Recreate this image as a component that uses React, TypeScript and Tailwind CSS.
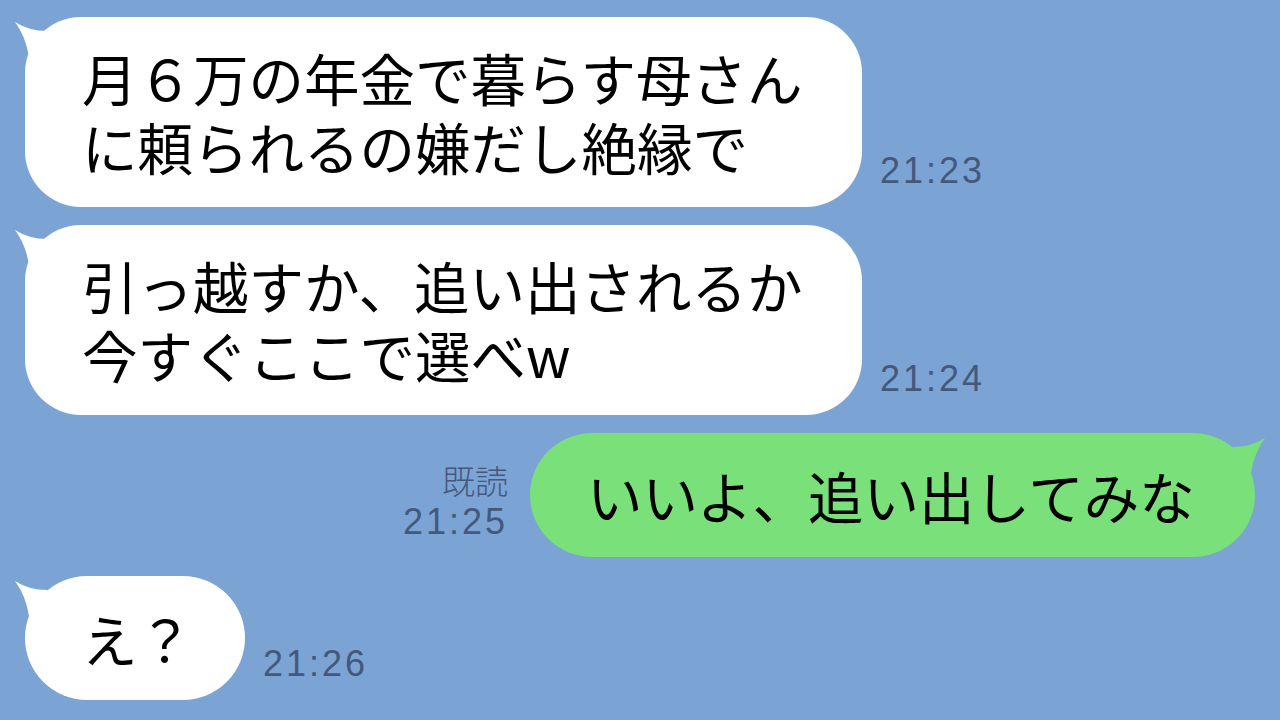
import React from 'react';

const jp = { fontFamily: '"Noto Sans CJK JP", "Noto Sans", sans-serif' };
const num = { fontFamily: '"Liberation Sans", Arial, sans-serif' };

function TailLeft() {
  return (
    <svg
      className="absolute left-[-12px] top-0 overflow-visible"
      width="48"
      height="48"
      viewBox="0 0 48 48"
    >
      <path d="M2 5 Q16 14 34 14 L40 44 L16 40 Q13 20 2 5 Z" fill="currentColor" />
    </svg>
  );
}

function TailRight() {
  return (
    <svg
      className="absolute right-[-12px] top-0 overflow-visible"
      width="48"
      height="48"
      viewBox="0 0 48 48"
    >
      <path d="M46 5 Q32 14 14 14 L8 44 L32 40 Q35 20 46 5 Z" fill="currentColor" />
    </svg>
  );
}

function Time({ t }: { t: string }) {
  return (
    <div style={num} className="text-[36px] leading-[36px] tracking-[3px] text-[#43597b]">
      {t}
    </div>
  );
}

function LeftMsg({ lines, time, tall }: { lines: string[]; time: string; tall?: boolean }) {
  return (
    <div className="flex items-end gap-[18px]">
      <div
        className={
          tall
            ? 'relative flex h-[190px] w-[837px] flex-col justify-center rounded-[56px] bg-white text-white px-[57px]'
            : 'relative flex h-[124px] w-[220px] flex-col justify-center rounded-[62px] bg-white text-white pl-[57px] pr-[50px]'
        }
      >
        <TailLeft />
        <div style={jp} className="relative text-[55.5px] leading-[69px] text-black whitespace-nowrap">
          {lines.map((l, i) => (
            <div key={i}>{l}</div>
          ))}
        </div>
      </div>
      <div className="mb-[18px]">
        <Time t={time} />
      </div>
    </div>
  );
}

export default function App() {
  return (
    <main className="h-[720px] w-[1280px] overflow-hidden bg-[#7ba4d5]">
      <div className="flex flex-col gap-[18px] px-[25px] pt-[17px]">
        <LeftMsg tall lines={['月６万の年金で暮らす母さん', 'に頼られるの嫌だし絶縁で']} time="21:23" />
        <LeftMsg tall lines={['引っ越すか、追い出されるか', '今すぐここで選べw']} time="21:24" />

        <div className="flex items-end justify-end gap-[22px]">
          <div className="mb-[17px] flex flex-col items-end">
            <div style={jp} className="text-[33px] font-light leading-[47px] text-[#43597b]">既読</div>
            <Time t="21:25" />
          </div>
          <div className="relative flex h-[124px] w-[725px] items-center rounded-[62px] bg-[#79e07a] px-[57px] text-[#79e07a]">
            <TailRight />
            <div style={jp} className="relative text-[55.5px] leading-[69px] text-black whitespace-nowrap">
              いいよ、追い出してみな
            </div>
          </div>
        </div>

        <div className="mt-[1px]">
          <LeftMsg lines={['え？']} time="21:26" />
        </div>
      </div>
    </main>
  );
}
